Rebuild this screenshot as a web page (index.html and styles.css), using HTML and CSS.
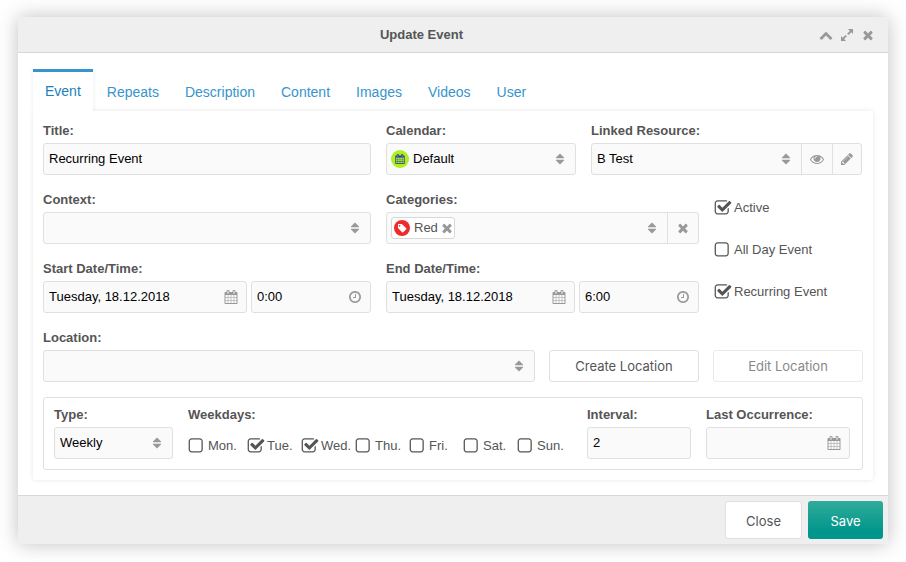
FILE: index.html
```html
<!DOCTYPE html>
<html lang="en">
<head>
<meta charset="utf-8">
<title>Update Event</title>
<link rel="stylesheet" href="styles.css">
</head>
<body>
<svg class="sprite" aria-hidden="true">
  <symbol id="i-up" viewBox="0 0 1792 1792"><path d="M1683 1331l-166 165q-19 19-45 19t-45-19l-531-531-531 531q-19 19-45 19t-45-19l-166-165q-19-19-19-45.5t19-45.5l742-741q19-19 45-19t45 19l742 741q19 19 19 45.5t-19 45.5z"/></symbol>
  <symbol id="i-expand" viewBox="0 0 14 14"><path d="M8 1h5v5l-1.700-1.700-2.800 2.800-1.400-1.400 2.800-2.800zM6 13H1V8l1.700 1.700 2.800-2.800 1.400 1.400-2.800 2.800z"/></symbol>
  <symbol id="i-times" viewBox="0 0 1792 1792"><path d="M1490 1322q0 40-28 68l-136 136q-28 28-68 28t-68-28l-294-294-294 294q-28 28-68 28t-68-28l-136-136q-28-28-28-68t28-68l294-294-294-294q-28-28-28-68t28-68l136-136q28-28 68-28t68 28l294 294 294-294q28-28 68-28t68 28l136 136q28 28 28 68t-28 68l-294 294 294 294q28 28 28 68z"/></symbol>
  <symbol id="i-sort" viewBox="0 0 10 12"><path d="M5 0.500L9 4.600a.4.4 0 0 1-.3.700H1.300a.4.400 0 0 1-.3-.700zM5 11.500L1 7.400a.4.400 0 0 1 .3-.700h7.400a.4.400 0 0 1 .3.700z"/></symbol>
  <symbol id="i-eye" viewBox="0 0 1792 1792"><path d="M1664 960q-152-236-381-353 61 104 61 225 0 185-131.5 316.5t-316.5 131.500-316.500-131.500-131.500-316.500q0-121 61-225-229 117-381 353 133 205 333.500 326.500t434.500 121.500 434.500-121.500 333.500-326.500zm-720-384q0-20-14-34t-34-14q-125 0-214.500 89.500t-89.500 214.500q0 20 14 34t34 14 34-14 14-34q0-86 61-147t147-61q20 0 34-14t14-34zm848 384q0 34-20 69-140 230-376.500 368.500t-499.500 138.500-499.500-139-376.500-368q-20-35-20-69t20-69q140-229 376.500-368t499.500-139 499.500 139 376.500 368q20 35 20 69z"/></symbol>
  <symbol id="i-pencil" viewBox="0 0 1792 1792"><path d="M491 1536l91-91-235-235-91 91v107h128v128h107zm523-928q0-22-22-22-10 0-17 7l-542 542q-7 7-7 17 0 22 22 22 10 0 17-7l542-542q7-7 7-17zm-54-192l416 416-832 832h-416v-416zm683 96q0 53-37 90l-166 166-416-416 166-165q36-38 90-38 53 0 91 38l235 234q37 39 37 91z"/></symbol>
  <symbol id="i-clock" viewBox="0 0 1792 1792"><path d="M1024 544v448q0 14-9 23t-23 9h-320q-14 0-23-9t-9-23v-64q0-14 9-23t23-9h224v-352q0-14 9-23t23-9h64q14 0 23 9t9 23zm416 352q0-148-73-273t-198-198-273-73-273 73-198 198-73 273 73 273 198 198 273 73 273-73 198-198 73-273zm224 0q0 209-103 385.500t-279.500 279.500-385.500 103-385.500-103-279.500-279.500-103-385.500 103-385.500 279.500-279.500 385.500-103 385.500 103 279.500 279.500 103 385.500z"/></symbol>
  <symbol id="i-calendar" viewBox="0 0 1792 1792"><path d="M192 1664h288v-288h-288v288zm352 0h320v-288h-320v288zm-352-352h288v-320h-288v320zm352 0h320v-320h-320v320zm-352-384h288v-288h-288v288zm736 736h320v-288h-320v288zm-384-736h320v-288h-320v288zm768 736h288v-288h-288v288zm-384-352h320v-320h-320v320zm-352-864v-288q0-13-9.500-22.500t-22.500-9.500h-64q-13 0-22.500 9.500t-9.500 22.500v288q0 13 9.500 22.500t22.500 9.500h64q13 0 22.500-9.500t9.500-22.500zm736 864h288v-320h-288v320zm-384-384h320v-288h-320v288zm384 0h288v-288h-288v288zm32-480v-288q0-13-9.500-22.500t-22.500-9.500h-64q-13 0-22.500 9.500t-9.500 22.500v288q0 13 9.500 22.500t22.500 9.500h64q13 0 22.500-9.500t9.500-22.500zm384-64v1280q0 52-38 90t-90 38h-1408q-52 0-90-38t-38-90v-1280q0-52 38-90t90-38h128v-96q0-66 47-113t113-47h64q66 0 113 47t47 113v96h384v-96q0-66 47-113t113-47h64q66 0 113 47t47 113v96h128q52 0 90 38t38 90z"/></symbol>
  <symbol id="i-tag" viewBox="0 0 10 10"><path fill-rule="evenodd" d="M1.200 1h3.300q.500 0 .900.400l3.800 3.800q.500.500 0 1L6.200 9.200q-.500.500-1 0L1.400 5.400Q1 5 1 4.500V1.200Q1 1 1.200 1zM2.600 1.900a.8.800 0 1 0 .01 0z"/></symbol>
  <symbol id="i-checked" viewBox="0 0 1792 1792"><path d="M1472 930v318q0 119-84.500 203.500t-203.500 84.500h-832q-119 0-203.500-84.500t-84.500-203.500v-832q0-119 84.500-203.500t203.500-84.500h832q63 0 117 25 15 7 18 23 3 17-9 29l-49 49q-10 10-23 10-3 0-9-2-23-6-45-6h-832q-66 0-113 47t-47 113v832q0 66 47 113t113 47h832q66 0 113-47t47-113v-254q0-13 9-22l64-64q10-10 23-10 6 0 12 3 20 8 20 29zm231-489l-814 814q-24 24-57 24t-57-24l-430-430q-24-24-24-57t24-57l110-110q24-24 57-24t57 24l263 263 647-647q24-24 57-24t57 24l110 110q24 24 24 57t-24 57z"/></symbol>
  <symbol id="i-unchecked" viewBox="0 0 1792 1792"><path d="M1184 256h-832q-66 0-113 47t-47 113v832q0 66 47 113t113 47h832q66 0 113-47t47-113v-832q0-66-47-113t-113-47zm288 160v832q0 119-84.500 203.500t-203.500 84.500h-832q-119 0-203.500-84.500t-84.500-203.500v-832q0-119 84.500-203.500t203.500-84.500h832q119 0 203.500 84.500t84.500 203.500z"/></symbol>
</svg>

<div class="window" role="dialog" aria-labelledby="window-title">
  <header class="titlebar">
    <h1 id="window-title">Update Event</h1>
    <button type="button" class="tool" aria-label="Collapse"><svg class="icon"><use href="#i-up"/></svg></button>
    <button type="button" class="tool" aria-label="Maximize"><svg class="icon"><use href="#i-expand"/></svg></button>
    <button type="button" class="tool" aria-label="Close window"><svg class="icon"><use href="#i-times"/></svg></button>
  </header>

  <form class="content">
    <nav class="tabs">
      <a href="#event" class="tab active">Event</a>
      <a href="#repeats" class="tab">Repeats</a>
      <a href="#description" class="tab">Description</a>
      <a href="#content" class="tab">Content</a>
      <a href="#images" class="tab">Images</a>
      <a href="#videos" class="tab">Videos</a>
      <a href="#user" class="tab">User</a>
    </nav>

    <div class="panel" id="event">
      <div class="row row-main">
        <div class="field">
          <label for="title">Title:</label>
          <div class="control"><input id="title" type="text" value="Recurring Event"></div>
        </div>
        <div class="field">
          <label for="calendar">Calendar:</label>
          <div class="control">
            <span class="badge badge-green"><svg class="icon icon-10"><use href="#i-calendar"/></svg></span>
            <span class="select after-badge"><select id="calendar"><option>Default</option></select><svg class="sort"><use href="#i-sort"/></svg></span>
          </div>
        </div>
        <div class="field">
          <label for="resource">Linked Resource:</label>
          <div class="control">
            <span class="select"><select id="resource"><option>B Test</option></select><svg class="sort"><use href="#i-sort"/></svg></span>
            <button type="button" class="addon" aria-label="View resource"><svg class="icon"><use href="#i-eye"/></svg></button>
            <button type="button" class="addon" aria-label="Edit resource"><svg class="icon"><use href="#i-pencil"/></svg></button>
          </div>
        </div>
      </div>

      <div class="row row-details">
        <div class="field">
          <label for="context">Context:</label>
          <div class="control">
            <span class="select"><select id="context"><option></option></select><svg class="sort"><use href="#i-sort"/></svg></span>
          </div>
        </div>
        <div class="field">
          <label for="categories">Categories:</label>
          <div class="control">
            <span class="chip">
              <span class="badge badge-red"><svg class="icon icon-10"><use href="#i-tag"/></svg></span>
              Red
              <button type="button" class="chip-remove" aria-label="Remove Red"><svg class="icon"><use href="#i-times"/></svg></button>
            </span>
            <span class="select"><select id="categories"><option></option></select><svg class="sort"><use href="#i-sort"/></svg></span>
            <button type="button" class="addon" aria-label="Clear categories"><svg class="icon"><use href="#i-times"/></svg></button>
          </div>
        </div>
        <div class="flags">
          <label class="check"><input type="checkbox" checked><svg class="on"><use href="#i-checked"/></svg><svg class="off"><use href="#i-unchecked"/></svg><span>Active</span></label>
          <label class="check"><input type="checkbox"><svg class="on"><use href="#i-checked"/></svg><svg class="off"><use href="#i-unchecked"/></svg><span>All Day Event</span></label>
          <label class="check"><input type="checkbox" checked><svg class="on"><use href="#i-checked"/></svg><svg class="off"><use href="#i-unchecked"/></svg><span>Recurring Event</span></label>
        </div>
        <div class="field">
          <label for="start-date">Start Date/Time:</label>
          <div class="datetime">
            <div class="control"><input id="start-date" type="text" value="Tuesday, 18.12.2018"><svg class="icon trailing"><use href="#i-calendar"/></svg></div>
            <div class="control"><input type="text" aria-label="Start time" value="0:00"><svg class="icon trailing"><use href="#i-clock"/></svg></div>
          </div>
        </div>
        <div class="field">
          <label for="end-date">End Date/Time:</label>
          <div class="datetime">
            <div class="control"><input id="end-date" type="text" value="Tuesday, 18.12.2018"><svg class="icon trailing"><use href="#i-calendar"/></svg></div>
            <div class="control"><input type="text" aria-label="End time" value="6:00"><svg class="icon trailing"><use href="#i-clock"/></svg></div>
          </div>
        </div>
      </div>

      <div class="row row-location">
        <div class="field">
          <label for="location">Location:</label>
          <div class="control">
            <span class="select"><select id="location"><option></option></select><svg class="sort"><use href="#i-sort"/></svg></span>
          </div>
        </div>
        <button type="button" class="button">Create Location</button>
        <button type="button" class="button" disabled>Edit Location</button>
      </div>

      <div class="recurrence">
        <div class="field">
          <label for="type">Type:</label>
          <div class="control">
            <span class="select"><select id="type"><option>Weekly</option></select><svg class="sort"><use href="#i-sort"/></svg></span>
          </div>
        </div>
        <fieldset class="field">
          <legend>Weekdays:</legend>
          <div class="weekdays">
            <label class="check"><input type="checkbox"><svg class="on"><use href="#i-checked"/></svg><svg class="off"><use href="#i-unchecked"/></svg><span>Mon.</span></label>
            <label class="check"><input type="checkbox" checked><svg class="on"><use href="#i-checked"/></svg><svg class="off"><use href="#i-unchecked"/></svg><span>Tue.</span></label>
            <label class="check"><input type="checkbox" checked><svg class="on"><use href="#i-checked"/></svg><svg class="off"><use href="#i-unchecked"/></svg><span>Wed.</span></label>
            <label class="check"><input type="checkbox"><svg class="on"><use href="#i-checked"/></svg><svg class="off"><use href="#i-unchecked"/></svg><span>Thu.</span></label>
            <label class="check"><input type="checkbox"><svg class="on"><use href="#i-checked"/></svg><svg class="off"><use href="#i-unchecked"/></svg><span>Fri.</span></label>
            <label class="check"><input type="checkbox"><svg class="on"><use href="#i-checked"/></svg><svg class="off"><use href="#i-unchecked"/></svg><span>Sat.</span></label>
            <label class="check"><input type="checkbox"><svg class="on"><use href="#i-checked"/></svg><svg class="off"><use href="#i-unchecked"/></svg><span>Sun.</span></label>
          </div>
        </fieldset>
        <div class="field">
          <label for="interval">Interval:</label>
          <div class="control"><input id="interval" type="text" value="2"></div>
        </div>
        <div class="field">
          <label for="last">Last Occurrence:</label>
          <div class="control"><input id="last" type="text" value=""><svg class="icon trailing"><use href="#i-calendar"/></svg></div>
        </div>
      </div>
    </div>
  </form>

  <footer class="footer">
    <button type="button" class="button large">Close</button>
    <button type="button" class="button large primary">Save</button>
  </footer>
</div>
</body>
</html>
```
FILE: styles.css
```css
* {
  box-sizing: border-box;
}

body {
  margin: 0;
  padding: 17px 18px;
  background: #fff;
  color: #555;
  font: 13px/18px "Liberation Sans", Arial, sans-serif;
}

.sprite {
  display: none;
}

button,
input,
select {
  font: inherit;
  color: inherit;
}

.icon {
  display: block;
  flex: none;
  width: 14px;
  height: 14px;
  fill: #999;
}

.icon-10 {
  width: 10px;
  height: 10px;
}

/* Window */
.window {
  background: #fff;
  border-radius: 3px;
  box-shadow: 0 0 20px rgba(0, 0, 0, 0.25);
}

.titlebar {
  display: flex;
  align-items: center;
  height: 36px;
  padding: 0 10px;
  background: #efefef;
  border-bottom: 1px solid #d8d8d8;
  border-radius: 3px 3px 0 0;
}

.titlebar h1 {
  flex: 1;
  margin: 0;
  font-size: 13px;
  text-align: center;
}

.tool {
  display: grid;
  place-items: center;
  width: 21px;
  height: 24px;
  padding: 0;
  border: 0;
  background: none;
}

.content {
  padding: 16px 15px 15px;
}

/* Tabs */
.tabs {
  display: flex;
  align-items: flex-end;
  gap: 2px;
}

.tab {
  height: 39px;
  padding: 0 12px;
  color: #3695cc;
  font-size: 14px;
  line-height: 40px;
  text-decoration: none;
}

.tab.active {
  position: relative;
  z-index: 1;
  height: 42px;
  border-top: 3px solid #3695cc;
  background: #fff;
  color: #1c7fb8;
  line-height: 38px;
  box-shadow: 0 0 5px rgba(0, 0, 0, 0.08);
  clip-path: inset(0 -5px);
}

.panel {
  display: grid;
  gap: 15px;
  padding: 10px;
  background: #fff;
  border-radius: 3px;
  box-shadow: 0 0 5px rgba(0, 0, 0, 0.1);
}

/* Form layout */
.row {
  display: grid;
  gap: 15px;
}

.row-main {
  grid-template-columns: 328fr 190fr 271fr;
  padding-right: 1px;
}

.row-details {
  grid-template-columns: 328fr 313fr 149fr;
}

.row-location {
  grid-template-columns: 1fr 150px 150px;
  align-items: end;
  gap: 14px;
}

.recurrence {
  display: grid;
  grid-template-columns: 119fr 384fr 104fr 144fr;
  gap: 15px;
  padding: 7px 12px 10px 10px;
  border: 1px solid #e0e0e0;
  border-radius: 3px;
}

.field {
  min-width: 0;
  margin: 0;
  padding: 0;
  border: 0;
}

.field > label,
.field > legend {
  display: block;
  padding: 0 0 2px;
  font-weight: bold;
  line-height: 20px;
}

.datetime {
  display: grid;
  grid-template-columns: 1fr 120px;
  gap: 4px;
}

.flags {
  display: grid;
  grid-row: span 2;
  align-content: start;
  gap: 6px;
}

.flags .check {
  height: 36px;
}

.weekdays {
  display: grid;
  grid-template-columns: 59px repeat(6, 54px);
  height: 32px;
  padding-top: 6px;
}

/* Controls */
.control {
  display: flex;
  align-items: center;
  min-width: 0;
  height: 32px;
  border: 1px solid #e0e0e0;
  border-radius: 3px;
  background: #fafafa;
  color: #000;
}

.control input {
  flex: 1;
  min-width: 0;
  height: 30px;
  padding: 0 5px 2px;
  border: 0;
  background: none;
}

.trailing {
  margin-right: 8px;
}

.select {
  display: grid;
  flex: 1;
  align-items: center;
  min-width: 0;
}

.select select {
  grid-area: 1 / 1;
  width: 100%;
  height: 30px;
  padding: 0 24px 0 5px;
  border: 0;
  background: none;
  appearance: none;
}

.after-badge select {
  padding-left: 4px;
}

.sort {
  grid-area: 1 / 1;
  justify-self: end;
  width: 10px;
  height: 12px;
  margin-right: 10px;
  fill: #999;
  pointer-events: none;
}

.addon {
  display: grid;
  place-items: center;
  width: 31px;
  height: 30px;
  padding: 0;
  border: 0;
  border-left: 1px solid #e0e0e0;
  background: none;
}

.addon + .addon {
  width: 29px;
}

.badge {
  display: grid;
  flex: none;
  place-items: center;
  width: 18px;
  height: 18px;
  border-radius: 50%;
}

.badge-green {
  margin-left: 4px;
  background: #adf01c;
}

.badge-green .icon {
  fill: #2a2fb8;
}

.badge-red {
  width: 16px;
  height: 16px;
  margin-right: 2px;
  background: #ee2b2b;
}

.badge-red .icon {
  fill: #fff;
}

.chip {
  display: flex;
  align-items: center;
  gap: 2px;
  height: 22px;
  margin-left: 4px;
  padding-left: 2px;
  border: 1px solid #d8d8d8;
  border-radius: 3px;
  background: #fff;
  color: #555;
}

.chip-remove {
  padding: 0;
  border: 0;
  background: none;
}

/* Checkboxes */
.check {
  display: grid;
  grid-template-columns: 18px auto;
  align-items: center;
  justify-content: start;
  gap: 2px;
}

.check input,
.check svg {
  grid-area: 1 / 1;
  width: 18px;
  height: 18px;
  margin: 0;
  fill: #555;
}

.check input {
  opacity: 0;
}

.check svg {
  pointer-events: none;
}

.check .on,
.check input:checked ~ .off {
  visibility: hidden;
}

.check input:checked ~ .on {
  visibility: visible;
}

/* Buttons */
.button {
  height: 32px;
  padding: 0 20px;
  border: 1px solid #e0e0e0;
  border-radius: 3px;
  background: #fff;
  font-family: Inter, "Liberation Sans", sans-serif;
}

.button:disabled {
  opacity: 0.7;
}

.button.large {
  min-width: 75px;
  height: 38px;
  padding-top: 2px;
}

.button.primary {
  border: 0;
  background: linear-gradient(#31ab9a, #00968b 80%);
  color: #fff;
}

.footer {
  display: flex;
  justify-content: flex-end;
  gap: 6px;
  padding: 5px;
  border-top: 1px solid #d8d8d8;
  border-radius: 0 0 3px 3px;
  background: #efefef;
}
```
